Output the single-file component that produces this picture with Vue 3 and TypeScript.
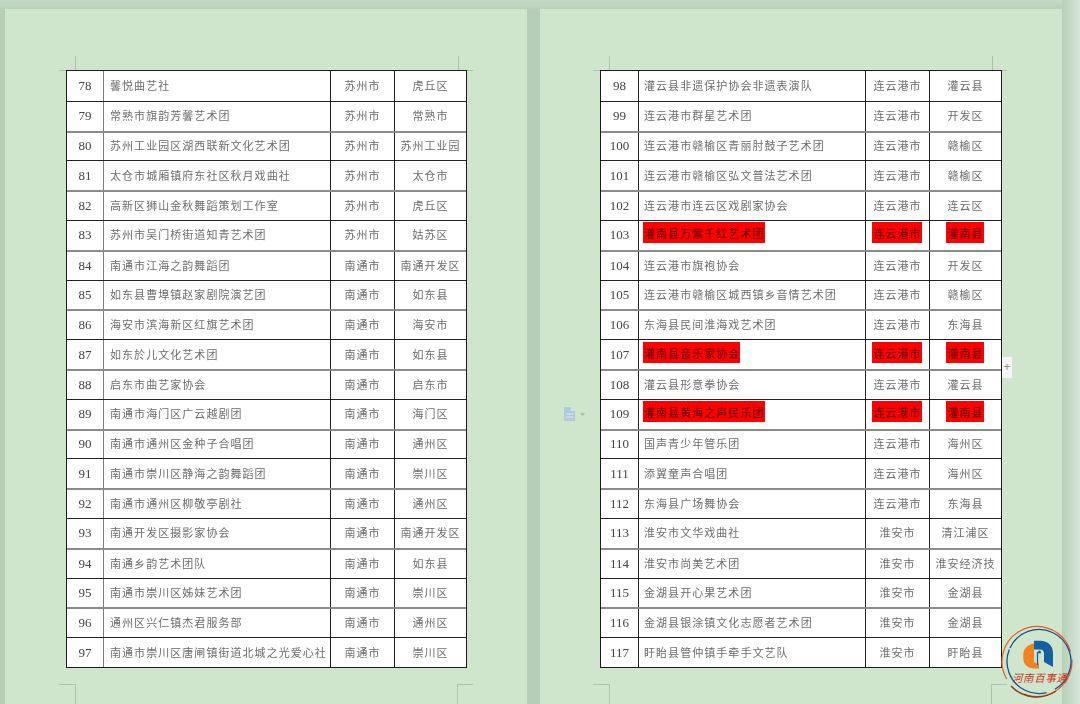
<script setup lang="ts">
type Row = { no: number; name: string; city: string; area: string; mark?: boolean };
const mk = (no: number, list: string): Row[] =>
  list.split('|').map((s, i) => {
    const [name, city, area, mark] = s.split(',');
    return { no: no + i, name, city, area, mark: mark === '1' };
  });
const left = mk(78, '馨悦曲艺社,苏州市,虎丘区|常熟市旗韵芳馨艺术团,苏州市,常熟市|苏州工业园区湖西联新文化艺术团,苏州市,苏州工业园|太仓市城厢镇府东社区秋月戏曲社,苏州市,太仓市|高新区狮山金秋舞蹈策划工作室,苏州市,虎丘区|苏州市吴门桥街道知青艺术团,苏州市,姑苏区|南通市江海之韵舞蹈团,南通市,南通开发区|如东县曹埠镇赵家剧院演艺团,南通市,如东县|海安市滨海新区红旗艺术团,南通市,海安市|如东於儿文化艺术团,南通市,如东县|启东市曲艺家协会,南通市,启东市|南通市海门区广云越剧团,南通市,海门区|南通市通州区金种子合唱团,南通市,通州区|南通市崇川区静海之韵舞蹈团,南通市,崇川区|南通市通州区柳敬亭剧社,南通市,通州区|南通开发区摄影家协会,南通市,南通开发区|南通乡韵艺术团队,南通市,如东县|南通市崇川区姊妹艺术团,南通市,崇川区|通州区兴仁镇杰君服务部,南通市,通州区|南通市崇川区唐闸镇街道北城之光爱心社,南通市,崇川区');
const right = mk(98, '灌云县非遗保护协会非遗表演队,连云港市,灌云县|连云港市群星艺术团,连云港市,开发区|连云港市赣榆区青丽肘鼓子艺术团,连云港市,赣榆区|连云港市赣榆区弘文普法艺术团,连云港市,赣榆区|连云港市连云区戏剧家协会,连云港市,连云区|灌南县万紫千红艺术团,连云港市,灌南县,1|连云港市旗袍协会,连云港市,开发区|连云港市赣榆区城西镇乡音情艺术团,连云港市,赣榆区|东海县民间淮海戏艺术团,连云港市,东海县|灌南县音乐家协会,连云港市,灌南县,1|灌云县形意拳协会,连云港市,灌云县|灌南县黄海之声民乐团,连云港市,灌南县,1|国声青少年管乐团,连云港市,海州区|添翼童声合唱团,连云港市,海州区|东海县广场舞协会,连云港市,东海县|淮安市文华戏曲社,淮安市,清江浦区|淮安市尚美艺术团,淮安市,淮安经济技|金湖县开心果艺术团,淮安市,金湖县|金湖县银涂镇文化志愿者艺术团,淮安市,金湖县|盱眙县管仲镇手牵手文艺队,淮安市,盱眙县');
const pages = [left, right];
</script>

<template>
  <div class="desk">
    <section v-for="(rows, p) in pages" :key="p" class="page">
      <svg class="marks" :class="{ shifted: p === 1 }" viewBox="0 0 522 695" aria-hidden="true">
        <path d="M70.500 47V61.500H54M453.500 47V61.500H468M54 675.500H70.500V695M468 675.500H452.500V695" />
      </svg>
      <div class="table" :class="{ second: p === 1 }">
        <div v-for="(r, i) in rows" :key="r.no" class="row" :class="{ soft: i % 2 === 0 && i > 0 }">
          <div class="cell no">{{ r.no }}</div>
          <div class="cell name"><span :class="{ hit: r.mark }">{{ r.name }}</span></div>
          <div class="cell city"><span :class="{ hit: r.mark }">{{ r.city }}</span></div>
          <div class="cell area"><span :class="{ hit: r.mark }">{{ r.area }}</span></div>
        </div>
      </div>
    </section>
    <aside class="rail"></aside>

    <svg class="doc" viewBox="0 0 24 16" aria-hidden="true">
      <path d="M1 1h7l4 4v10H1z" fill="#aecadb" />
      <path d="M8 1v4h4" fill="#d5e4ea" />
      <path d="M3 8h7M3 11h7" stroke="#e4eeee" stroke-width="1" />
      <path d="M17 7h5l-2.500 3z" fill="#a8b8aa" />
    </svg>
    <div class="plus">+</div>

    <svg class="logo" viewBox="0 0 80 80" aria-hidden="true">
      <circle cx="39" cy="39.500" r="35" fill="none" stroke="#e95a1c" stroke-width="1.200" stroke-dasharray="118 8 70 24" transform="rotate(150 39 39.500)" />
      <path d="M13 64A35 35 0 0 0 58 69" fill="none" stroke="#8a3a20" stroke-width="1.500" />
      <circle cx="41" cy="39.500" r="32" fill="none" stroke="#174f8f" stroke-width="1.300" stroke-dasharray="120 9 70 2" transform="rotate(205 41 39.500)" />
      <path d="M36 21.500C29 22.500 25.300 27 25.300 33V36C25.300 42.500 30 46.500 36 46.500H41V41.500H39C37.300 41.500 36 40 36 38Z" fill="#f08222" />
      <path d="M36 18.800H42C50 18.800 55 24 55 31V45L46 40V31.500C46 29 44.500 27.500 42 27.500H36Z" fill="#17609f" />
      <path d="M39.500 30V43" stroke="#17609f" stroke-width="1.300" />
      <circle cx="41.500" cy="30" r="1.500" fill="#17609f" />
      <text x="14" y="60" class="logo-text">河南百事通</text>
    </svg>
  </div>
</template>

<style>
html, body { margin: 0; overflow: hidden; background: #cde3cb; }
</style>

<style scoped>
.desk {
  position: relative;
  width: 1080px;
  height: 704px;
  overflow: hidden;
  display: flex;
  gap: 13px;
  padding: 9px 0 0 5px;
  box-sizing: border-box;
  background: #b5cfb6;
  background-image: linear-gradient(#c8dbc9, #b5cfb6 10px);
  font-family: "Noto Sans CJK SC", "Liberation Serif", serif;
}
.page {
  position: relative;
  flex: 0 0 522px;
  height: 720px;
  background: #cfe6cc;
  padding: 61px 0 0 61px;
  box-sizing: border-box;
}
.marks {
  position: absolute;
  left: 0;
  top: 0;
  width: 522px;
  height: 695px;
  fill: none;
  stroke: #a9c2a8;
  stroke-width: 1;
}
.marks.shifted { left: -1px; }
.rail {
  position: absolute;
  left: 1062px;
  top: 0;
  bottom: 0;
  width: 18px;
  background: linear-gradient(90deg, #b7cfb8, #d6e6d8);
}
.table {
  position: relative;
  width: 401px;
  background: #fff;
  border: 1px solid #1c1c1c;
  box-sizing: border-box;
  height: 598px;
  filter: blur(0.3px);
}
.table.second { margin-left: -1px; width: 402px; }
.row {
  display: flex;
  height: 29.8px;
  box-sizing: border-box;
  border-top: 1px solid #222;
}
.row:first-child { border-top: 0; }
.row.soft { border-top: 2px solid #8b8b8b; }
.cell {
  display: flex;
  align-items: center;
  justify-content: center;
  box-sizing: border-box;
  padding-bottom: 2px;
  font-size: 11px;
  letter-spacing: 1.050px;
  color: #6c6c6c;
  white-space: nowrap;
  border-left: 1px solid #222;
}
.no {
  flex: 0 0 37px;
  padding-bottom: 0;
  border-left: 0;
  border-right: 1px solid #7c7c7c;
  font-family: "Liberation Serif", serif;
  font-size: 13px;
  letter-spacing: 0;
  color: #444;
}
.name { flex: 0 0 226px; justify-content: flex-start; padding-left: 6px; border-left: 0; }
.city { flex: 0 0 64px; }
.area { flex: 1 1 0; }
.second .no { border-right-color: #222; flex-basis: 38px; }
.second .name { padding-left: 5px; }
.hit {
  display: inline-block;
  background: #ff0000;
  color: #4a0000;
  line-height: 20px;
  padding: 1px 0 0 1px;
  margin: -3px 0 0 -1px;
}
.doc { position: absolute; left: 563px; top: 406px; width: 24px; height: 16px; filter: blur(0.3px); }
.plus {
  position: absolute;
  left: 1002px;
  top: 356px;
  width: 11px;
  height: 23px;
  box-sizing: border-box;
  background: #f4f6f3;
  border: 1px solid #d8dfd6;
  border-left: 0;
  border-radius: 0 2px 2px 0;
  color: #8d8d8d;
  font: 12px/21px "Liberation Sans", sans-serif;
  text-align: center;
}
.logo { position: absolute; left: 998px; top: 622px; width: 80px; height: 80px; }
.logo-text {
  font-family: "Noto Sans CJK SC", sans-serif;
  font-size: 10.500px;
  font-style: italic;
  letter-spacing: 0.600px;
  fill: #c9341c;
}
</style>
